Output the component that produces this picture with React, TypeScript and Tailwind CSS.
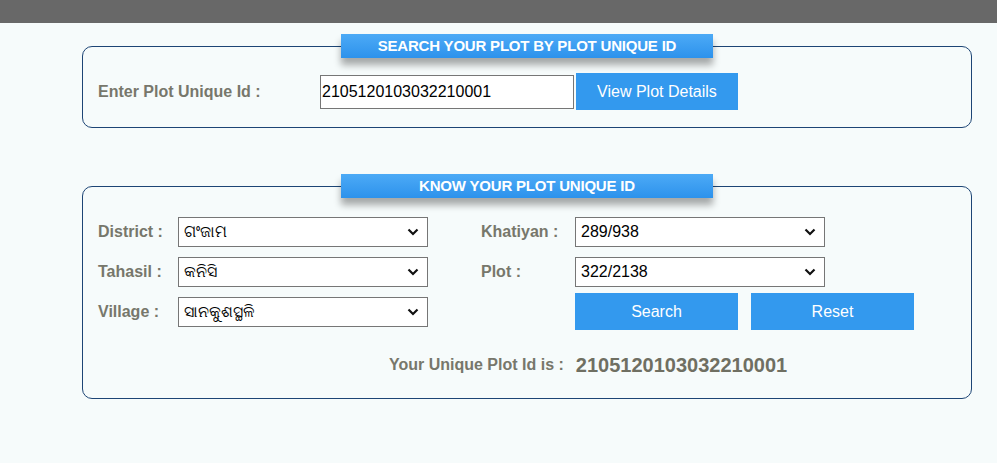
import React from "react";

const Chevron = () => (
  <svg
    className="pointer-events-none absolute right-[9px] top-1/2 -translate-y-1/2"
    width="12"
    height="8"
    viewBox="0 0 12 8"
  >
    <path d="M1.5 1.5 L6 6 L10.5 1.5" fill="none" stroke="#111" strokeWidth="2.2" />
  </svg>
);

function Select({ value }: { value: string }) {
  return (
    <div className="relative h-[30px] w-[250px]">
      <select
        defaultValue={value}
        className="h-full w-full appearance-none border border-[#767676] bg-white pl-[5px] text-[16px] text-black outline-none"
      >
        <option>{value}</option>
      </select>
      <Chevron />
    </div>
  );
}

function Header({ title }: { title: string }) {
  return (
    <div className="absolute left-[258px] top-[-13px] flex h-[24px] w-[372px] items-center justify-center bg-gradient-to-b from-[#4caaf6] to-[#2c92ec] text-[15px] font-bold tracking-[-0.2px] text-white shadow-[0_7px_7px_rgba(0,0,0,0.33)]">
      {title}
    </div>
  );
}

export default function App() {
  return (
    <div
      className="min-h-[463px] w-full bg-[#f6fbfb]"
      style={{ fontFamily: '"Liberation Sans", Arial, "Noto Sans", sans-serif' }}
    >
      <div className="h-[23px] w-full bg-[#686868]" />

      <div className="ml-[82px] mt-[23px] w-[890px]">
        {/* Box 1 */}
        <div className="relative h-[82px] rounded-[10px] border border-[#1d4575]">
          <Header title="SEARCH YOUR PLOT BY PLOT UNIQUE ID" />
          <div className="flex items-center pl-[15px] pt-[26px]">
            <div className="w-[222px] text-[16px] font-bold text-[#77776b]">Enter Plot Unique Id :</div>
            <input
              defaultValue="2105120103032210001"
              className="h-[34px] w-[254px] border border-[#767676] bg-white pl-[1px] text-[16px] text-black outline-none"
            />
            <button className="ml-[2px] h-[37px] w-[162px] bg-[#3399ee] text-[16px] text-white">
              View Plot Details
            </button>
          </div>
        </div>

        {/* Box 2 */}
        <div className="relative mt-[58px] h-[213px] rounded-[10px] border border-[#1d4575]">
          <Header title="KNOW YOUR PLOT UNIQUE ID" />
          <div className="flex flex-col pl-[15px] pt-[30px]">
            <div className="flex items-center">
              <div className="w-[80px] text-[16px] font-bold text-[#77776b]">District :</div>
              <Select value="ଗଂଜାମ" />
              <div className="ml-[53px] w-[94px] text-[16px] font-bold text-[#77776b]">Khatiyan :</div>
              <Select value="289/938" />
            </div>
            <div className="mt-[10px] flex items-center">
              <div className="w-[80px] text-[16px] font-bold text-[#77776b]">Tahasil :</div>
              <Select value="କନିସି" />
              <div className="ml-[53px] w-[94px] text-[16px] font-bold text-[#77776b]">Plot :</div>
              <Select value="322/2138" />
            </div>
            <div className="mt-[6px] flex items-center">
              <div className="w-[80px] text-[16px] font-bold text-[#77776b]">Village :</div>
              <Select value="ସାନକୁଶସ୍ଥଳି" />
              <div className="ml-[147px] flex gap-[13px]">
                <button className="h-[37px] w-[163px] bg-[#3399ee] text-[16px] text-white">Search</button>
                <button className="h-[37px] w-[163px] bg-[#3399ee] text-[16px] text-white">Reset</button>
              </div>
            </div>
            <div className="mt-[20px] flex items-center pl-[291px]">
              <span className="text-[16px] font-bold text-[#77776b]">Your Unique Plot Id is :</span>
              <span className="ml-[12px] text-[20px] font-bold text-[#6f6f62]">2105120103032210001</span>
            </div>
          </div>
        </div>
      </div>
    </div>
  );
}
